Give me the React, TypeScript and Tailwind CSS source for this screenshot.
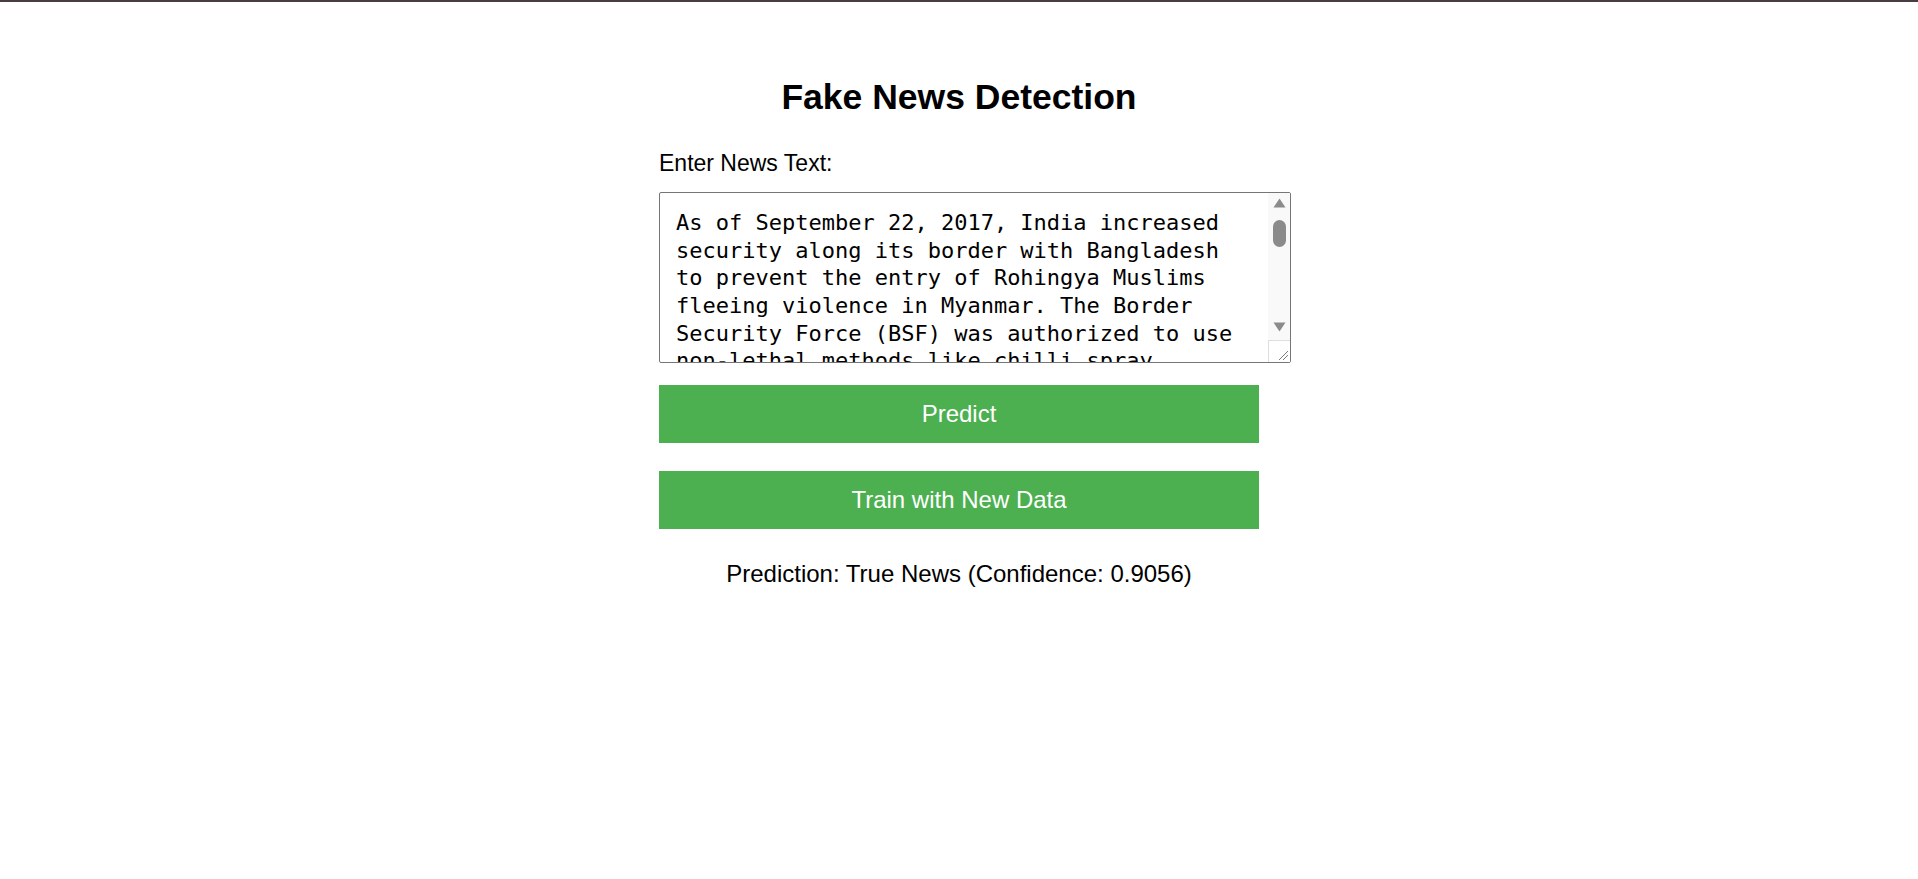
import React from "react";

const NEWS_TEXT =
  "As of September 22, 2017, India increased security along its border with Bangladesh to prevent the entry of Rohingya Muslims fleeing violence in Myanmar. The Border Security Force (BSF) was authorized to use non-lethal methods like chilli spray grenades to push back refugees attempting to cross into Indian territory. Officials said the measures were meant to deter illegal immigration without causing serious injury to those trying to cross. More than 420,000 Rohingya had fled Myanmar's Rakhine state since late August, most of them into Bangladesh, following a military crackdown that the United Nations described as a textbook example of ethnic cleansing. India's government has said it considers the Rohingya illegal immigrants and a potential security risk, and has sought to deport some 40,000 who are already living in the country. Human rights groups criticized the decision, urging India to respect its international obligations and provide shelter to those fleeing persecution. The Supreme Court is expected to hear a petition challenging the deportation plan in the coming weeks, while border guards continue to patrol the riverine frontier day and night.";

function ScrollbarOverlay() {
  return (
    <div className="pointer-events-none absolute top-[1px] right-[1px] bottom-[1px] flex w-[22px] flex-col">
      <div className="flex flex-1 flex-col items-center bg-[#f9f9f9] pt-[5px] pb-[8px]">
        <svg width="13" height="10" viewBox="0 0 13 10">
          <path d="M6.5 0.5 L12.5 9.5 L0.5 9.5 Z" fill="#8b8b8b" />
        </svg>
        <div className="mt-[12px] h-[27px] w-[13px] rounded-full bg-[#8b8b8b]" />
        <div className="flex-1" />
        <svg width="13" height="10" viewBox="0 0 13 10">
          <path d="M0.5 0.5 L12.5 0.5 L6.5 9.5 Z" fill="#8b8b8b" />
        </svg>
      </div>
      <div className="relative h-[22px] w-[22px] border-t border-l border-[#dedede] bg-white">
        <svg className="absolute right-[1px] bottom-[1px]" width="12" height="12" viewBox="0 0 12 12">
          <path d="M2 11 L11 2" stroke="#7a7a7a" strokeWidth="1" />
          <path d="M6 11 L11 6" stroke="#7a7a7a" strokeWidth="1" />
        </svg>
      </div>
    </div>
  );
}

export default function App() {
  return (
    <div className="min-h-screen bg-white font-['Liberation_Sans',Arial,sans-serif] text-black">
      <div className="h-[2px] bg-[#4a3d40]" />
      <div className="mx-auto w-[600px] pt-[75px]">
        <h1 className="text-center text-[35.5px] font-bold leading-[40.8px]">
          Fake News Detection
        </h1>
        <label className="mt-[32px] block text-[23px] leading-[26.4px]">
          Enter News Text:
        </label>
        <div className="relative mt-[16px] w-[632px]">
          <textarea
            defaultValue={NEWS_TEXT}
            className="block h-[171px] w-[632px] resize-none overflow-hidden rounded-[2px] border border-[#767676] bg-white pt-[16px] pl-[16px] pr-[37px] pb-[16px] font-['DejaVu_Sans_Mono','Liberation_Mono',monospace] text-[22px] leading-[27.6px] text-black outline-none"
          />
          <ScrollbarOverlay />
        </div>
        <button className="mt-[22px] flex h-[58px] w-[600px] items-center justify-center bg-[#4caf50] text-[24px] leading-[27.6px] text-white">
          Predict
        </button>
        <button className="mt-[28px] flex h-[58px] w-[600px] items-center justify-center bg-[#4caf50] text-[24px] leading-[27.6px] text-white">
          Train with New Data
        </button>
        <p className="mt-[31px] text-center text-[24px] leading-[27.6px]">
          Prediction: True News (Confidence: 0.9056)
        </p>
      </div>
    </div>
  );
}
